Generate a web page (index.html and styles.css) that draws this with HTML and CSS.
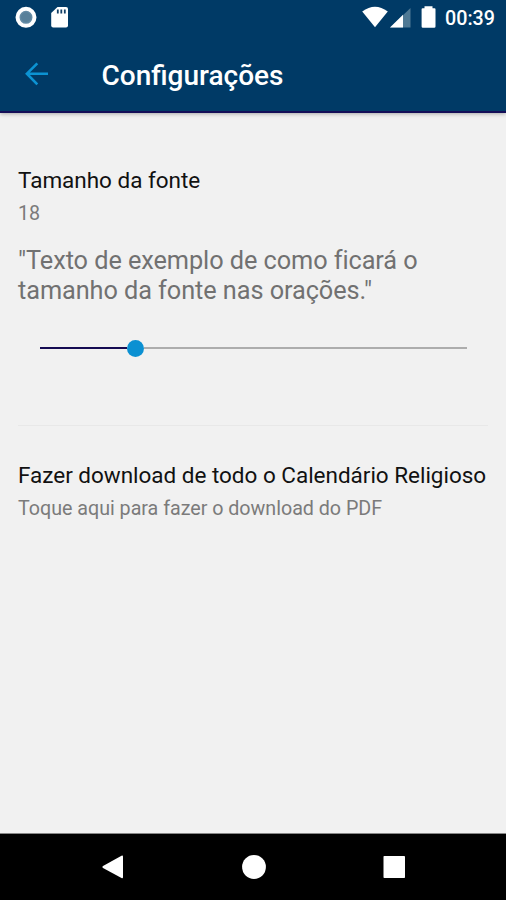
FILE: index.html
```html
<!DOCTYPE html>
<html lang="pt-BR">
<head>
<meta charset="utf-8">
<meta name="viewport" content="width=device-width">
<title>Configurações</title>
<link rel="stylesheet" href="styles.css">
</head>
<body>
<div class="screen">
  <header class="header">
    <div class="status">
      <svg class="status-left" viewBox="0 0 80 34" width="80" height="34" aria-hidden="true">
        <circle cx="26" cy="17.3" r="8.5" fill="#648ba5" stroke="#fff" stroke-width="4"/>
        <circle cx="26" cy="17.3" r="5" fill="#58809a"/>
        <path d="M57.5 7H66q2 0 2 2v16.500q0 2-2 2H53.200q-2 0-2-2V13z" fill="#fff"/>
        <path d="M57.800 9.500v4M61.300 9.500v4M64.800 9.500v4" stroke="#123f66" stroke-width="1.800"/>
      </svg>
      <svg class="status-right" viewBox="0 0 80 34" width="80" height="34" aria-hidden="true">
        <path d="M2.200 11.500Q15 2 27.800 11.500L15 27.300z" fill="#fff"/>
        <path d="M50.500 8v19.500H30z" fill="#4f7994"/>
        <path d="M43 14.800v12.700H30z" fill="#fff"/>
        <path d="M64.500 6.300h8v2h2q1 0 1 1V26.500q0 1.300-1.300 1.300H62.900q-1.300 0-1.300-1.300V9.300q0-1 1-1h1.900z" fill="#fff"/>
      </svg>
      <span class="clock">00:39</span>
    </div>
    <div class="toolbar">
      <svg class="back" viewBox="0 0 24 24" width="24" height="24" aria-hidden="true">
        <path d="M23 11.700H2M12.300 1.300L1.900 11.700l10.400 10.600" fill="none" stroke="#0c93d3" stroke-width="2.600"/>
      </svg>
      <h1 class="title">Configurações</h1>
    </div>
  </header>
  <main class="content">
    <section class="setting">
      <h2 class="label">Tamanho da fonte</h2>
      <p class="value">18</p>
      <p class="sample">"Texto de exemplo de como ficará o<br>tamanho da fonte nas orações."</p>
      <div class="slider"><span class="fill"></span><span class="thumb"></span><span class="rest"></span></div>
    </section>
    <section class="setting download">
      <h2 class="label download-label">Fazer download de todo o Calendário Religioso</h2>
      <p class="value hint">Toque aqui para fazer o download do PDF</p>
    </section>
  </main>
  <nav class="nav">
    <svg viewBox="0 0 24 26" width="24" height="26" aria-hidden="true"><path d="M2 12L20.500 1.700q1.500-.8 1.500 1V23q0 1.800-1.500 1L2 14q-1.500-1 0-2z" fill="#fff"/></svg>
    <svg viewBox="0 0 24 26" width="24" height="26" aria-hidden="true"><circle cx="12" cy="13" r="11.900" fill="#fff"/></svg>
    <svg viewBox="0 0 24 26" width="24" height="26" aria-hidden="true"><rect x="1.500" y="2" width="21.500" height="22" rx=".8" fill="#fff"/></svg>
  </nav>
</div>
</body>
</html>
```
FILE: styles.css
```css
* { box-sizing: border-box; }
body { margin: 0; font-family: Roboto, "Liberation Sans", sans-serif; background: #f1f1f1; }
h1, h2, p { margin: 0; white-space: nowrap; }
.screen { width: 506px; height: 900px; display: flex; flex-direction: column; overflow: hidden; }
.header { height: 113px; flex: none; background: #003a66; border-bottom: 2px solid #140e58; box-shadow: 0 1px 4px rgba(0, 0, 0, .3); color: #fff; }
.status { height: 34px; display: flex; align-items: center; }
.status-right { margin-left: 280px; }
.clock { margin-left: 5px; padding-top: 3px; font-size: 19.700px; font-weight: 500; line-height: 24px; }
.toolbar { height: 77px; display: flex; align-items: center; padding-left: 25px; }
.back { margin-top: 3px; }
.title { margin-left: 52.500px; padding-top: 6px; font-size: 28px; font-weight: 500; line-height: 32px; }
.content { flex: 1; padding: 0 18px; }
.setting { padding-top: 53px; }
.label { font-size: 22.500px; font-weight: 400; line-height: 28px; letter-spacing: -.02px; color: #111; }
.value { margin-top: 8px; font-size: 19.700px; line-height: 24px; letter-spacing: -.02px; color: #7b7b7b; }
.sample { margin-top: 20px; font-size: 25.300px; line-height: 29.500px; letter-spacing: -.07px; color: #717171; }
.slider { display: flex; align-items: center; height: 18px; margin: 34px 21px 0 22px; }
.fill { width: 87px; height: 2.500px; background: #150b52; }
.thumb { width: 17px; height: 17px; border-radius: 50%; background: #0b90d2; }
.rest { flex: 1; height: 2.500px; background: #adadad; }
.download { margin-top: 68px; padding-top: 35px; border-top: 1px solid #e8e8e8; }
.nav { height: 67px; flex: none; display: flex; align-items: center; justify-content: space-between; padding: 0 100px 0 101px; background: #000; border-top: 1px solid #888; }
```
